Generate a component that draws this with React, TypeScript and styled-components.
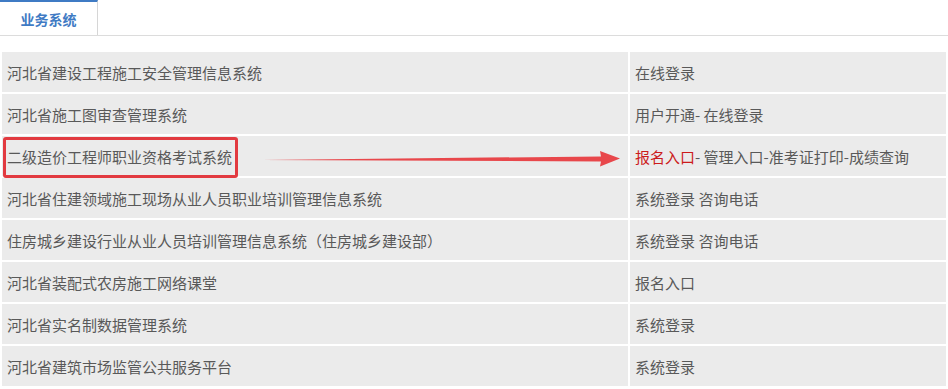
import React from "react";
import styled, { createGlobalStyle } from "styled-components";

type Link = { label: string; hot?: boolean };
type System = { name: string; links: Link[]; sep?: string; marked?: boolean };

const systems: System[] = [
  { name: "河北省建设工程施工安全管理信息系统", links: [{ label: "在线登录" }] },
  { name: "河北省施工图审查管理系统", links: [{ label: "用户开通" }, { label: "在线登录" }], sep: "- " },
  {
    name: "二级造价工程师职业资格考试系统",
    marked: true,
    links: [
      { label: "报名入口", hot: true },
      { label: " 管理入口" },
      { label: "准考证打印" },
      { label: "成绩查询" },
    ],
    sep: "-",
  },
  { name: "河北省住建领域施工现场从业人员职业培训管理信息系统", links: [{ label: "系统登录" }, { label: "咨询电话" }], sep: " " },
  { name: "住房城乡建设行业从业人员培训管理信息系统（住房城乡建设部）", links: [{ label: "系统登录" }, { label: "咨询电话" }], sep: " " },
  { name: "河北省装配式农房施工网络课堂", links: [{ label: "报名入口" }] },
  { name: "河北省实名制数据管理系统", links: [{ label: "系统登录" }] },
  { name: "河北省建筑市场监管公共服务平台", links: [{ label: "系统登录" }] },
];

const App: React.FC = () => {
  return (
    <Page>
      <GlobalStyle />
      <TabBar>
        <Tab>业务系统</Tab>
      </TabBar>
      <Board>
        <Table>
          <tbody>
            {systems.map((s) => (
              <tr key={s.name}>
                <NameCell>
                  {s.name}
                  {s.marked && <MarkBox />}
                </NameCell>
                <LinkCell>
                  {s.links.map((l, i) => (
                    <React.Fragment key={l.label}>
                      {i > 0 && s.sep}
                      <LinkText $hot={l.hot}>{l.label}</LinkText>
                    </React.Fragment>
                  ))}
                </LinkCell>
              </tr>
            ))}
          </tbody>
        </Table>
        {/* tapered pointer from the marked system to its entry link */}
        <Arrow width="360" height="18" viewBox="0 0 360 18">
          <path d="M0 10 L339 6.4 L338 1 L358 8.6 L338 16.5 L339 11.4 Z" fill="#e8474b" />
        </Arrow>
      </Board>
    </Page>
  );
};

export default App;

const GlobalStyle = createGlobalStyle`
  body {
    margin: 0;
    background: #fff;
    font-family: "Microsoft YaHei", "Noto Sans CJK SC", sans-serif;
  }
`;

const Page = styled.div`
  width: 948px;
`;

const TabBar = styled.div`
  display: flex;
  height: 35px;
  border-bottom: 1px solid #dcdcdc;
`;

const Tab = styled.div`
  width: 98px;
  display: flex;
  align-items: center;
  justify-content: center;
  border-top: 2px solid #3f7bc4;
  border-right: 1px solid #d6d6d6;
  box-sizing: border-box;
  color: #3f7bc4;
  font-size: 14px;
  font-weight: bold;
  padding-top: 1px;
`;

const Board = styled.div`
  position: relative;
  margin-top: 14px;
`;

const Table = styled.table`
  width: 948px;
  border-collapse: separate;
  border-spacing: 2px;
  table-layout: fixed;
  font-size: 15px;
  color: #595959;

  td {
    height: 40px;
    padding: 0 0 0 5px;
    background: #ebebeb;
    box-sizing: border-box;
    white-space: nowrap;
  }
`;

const NameCell = styled.td`
  position: relative;
  width: 626px;
`;

const LinkCell = styled.td``;

const LinkText = styled.span<{ $hot?: boolean }>`
  color: ${(p) => (p.$hot ? "#cc1b1b" : "inherit")};
`;

const MarkBox = styled.span`
  position: absolute;
  left: 1px;
  top: 1px;
  width: 235px;
  height: 41px;
  border: 3px solid #e23a40;
  border-radius: 3px;
  box-sizing: border-box;
`;

const Arrow = styled.svg`
  position: absolute;
  left: 262px;
  top: 100px;
`;
